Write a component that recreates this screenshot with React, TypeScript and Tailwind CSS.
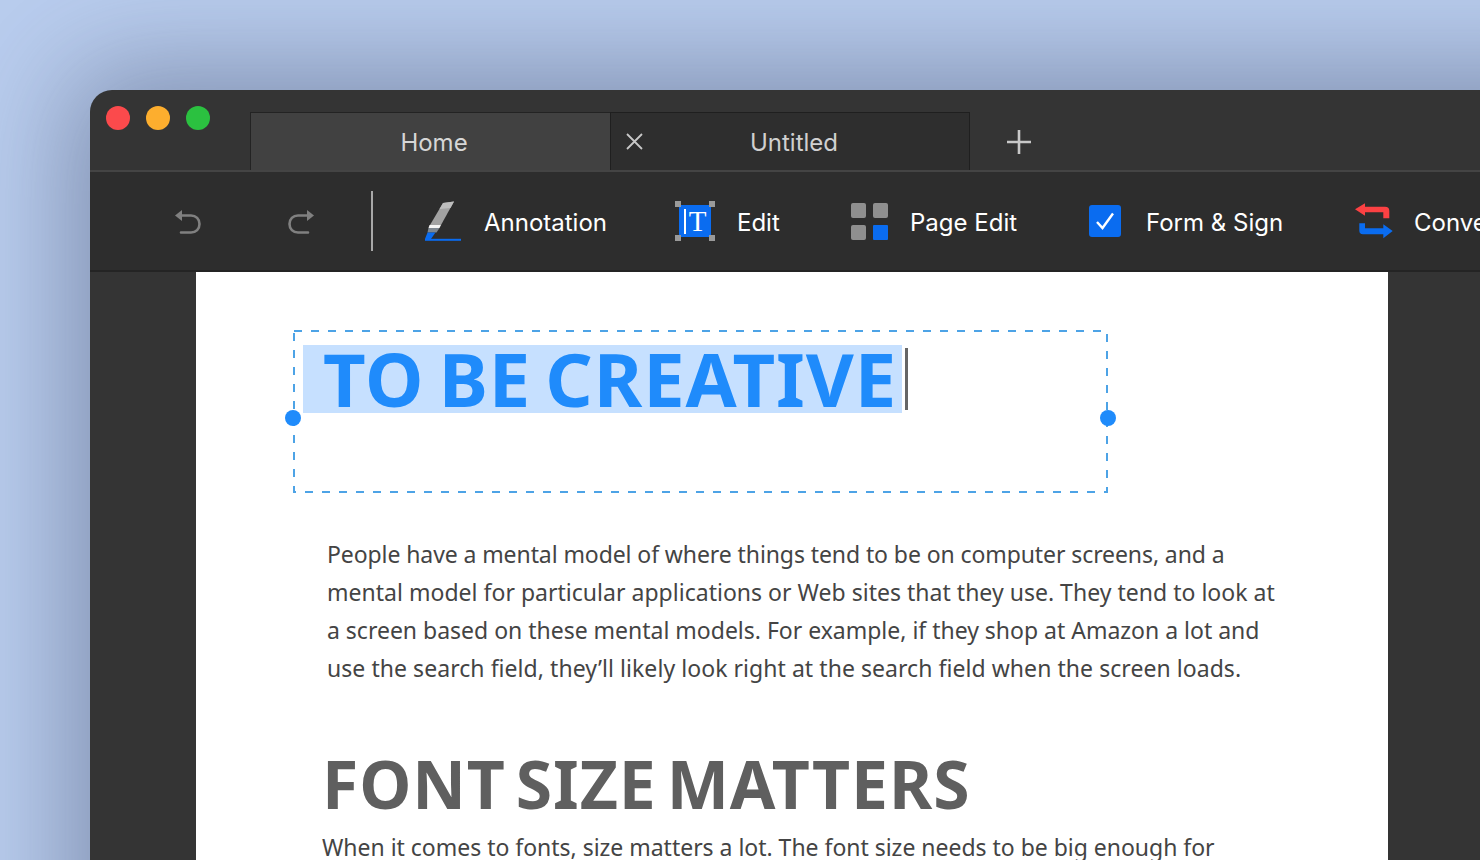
import React from "react";

function Undo({ flip = false }: { flip?: boolean }) {
  return (
    <svg width="26" height="27" viewBox="0 0 26 27" fill="none" className={flip ? "-scale-x-100" : ""}>
      <path d="M0 7.500 L7 2 V13 Z" fill="#808080" />
      <path d="M6 7.500 H16 C21 7.500 24.500 11 24.500 16 C24.500 21 21 24.500 16 24.500 H6" stroke="#808080" strokeWidth="2.600" strokeLinecap="round" />
    </svg>
  );
}

function Pen() {
  return (
    <svg width="40" height="42" viewBox="0 0 40 42" fill="none" className="mt-[1px]">
      <path d="M20 2 L31 0.500 L18 24 H7 Z" fill="#a2a2a2" />
      <path d="M20 2 L31 0.500 L27.500 7 L16.500 8 Z" fill="#bdbdbd" />
      <path d="M6.500 24 H18 L16.500 27 H5.500 Z" fill="#f4f4f4" />
      <path d="M5.500 27 H16.500 L13.500 31.500 H4.500 Z" fill="#7e8790" />
      <path d="M4.500 31.500 H12.500 L8 38 H2 Z" fill="#0a6cf0" />
      <rect x="2" y="37.800" width="36" height="2" fill="#0a6cf0" />
    </svg>
  );
}

function EditIcon() {
  return (
    <div className="relative h-[40px] w-[40px]">
      <div className="absolute left-[4px] top-[4px] flex h-[32px] w-[32px] items-center justify-center gap-[3px] bg-[#0a6cf0] text-[29px] leading-none text-white [font-family:'Liberation_Serif',serif]">
        <span className="h-[25px] w-[2px] bg-white" />
        <span>T</span>
      </div>
      <span className="absolute left-0 top-0 h-[6px] w-[6px] bg-[#9a9a9a]" />
      <span className="absolute right-0 top-0 h-[6px] w-[6px] bg-[#9a9a9a]" />
      <span className="absolute bottom-0 left-0 h-[6px] w-[6px] bg-[#9a9a9a]" />
      <span className="absolute bottom-0 right-0 h-[6px] w-[6px] bg-[#9a9a9a]" />
    </div>
  );
}

function PageIcon() {
  return (
    <div className="grid h-[37px] w-[37px] grid-cols-2 gap-[7px]">
      <span className="rounded-[2px] bg-[#8f8f8f]" />
      <span className="rounded-[2px] bg-[#8f8f8f]" />
      <span className="rounded-[2px] bg-[#8f8f8f]" />
      <span className="rounded-[1px] bg-[#0a6cf0]" />
    </div>
  );
}

function FormIcon() {
  return (
    <div className="flex h-[32px] w-[32px] items-center justify-center rounded-[3px] bg-[#0a6cf0]">
      <svg width="22" height="20" viewBox="0 0 22 20" fill="none">
        <path d="M3 11 L8.500 17 L19 2.500" stroke="#fff" strokeWidth="2.400" />
      </svg>
    </div>
  );
}

function ConvertIcon() {
  return (
    <svg width="38" height="36" viewBox="0 0 38 36" fill="none">
      <path d="M0 6.300 L10 0.300 V3.700 H30 C33 3.700 34.300 5 34.300 8 V15.300 H28.300 V9.300 H10 V12.700 Z" fill="#fb4143" />
      <path d="M37.700 28 L28.300 35.300 V31.300 H8 C5.500 31.300 4.300 30 4.300 27.500 V20.300 H10 V25.300 H28.300 V21.300 Z" fill="#0a6cf0" />
    </svg>
  );
}

function Tool({ icon, label, gap, width }: { icon: React.ReactNode; label: string; gap: string; width: string }) {
  return (
    <div className={`flex shrink-0 items-center ${gap} ${width}`}>
      <div className="shrink-0">{icon}</div>
      <span className="whitespace-nowrap pt-[3px] text-[24px] leading-none text-white">{label}</span>
    </div>
  );
}

export default function App() {
  return (
    <div className="h-[860px] w-[1480px] overflow-hidden bg-[#b9cdee] pl-[90px] pt-[90px] [font-family:Inter,'Liberation_Sans',sans-serif]">
      <div className="flex h-[900px] w-[1500px] flex-col rounded-tl-[22px] bg-[#343434] shadow-[0_0_110px_20px_rgba(50,60,90,0.42)]">
        {/* Title bar */}
        <div className="flex h-[82px] shrink-0 items-start border-b-2 border-[#444444]">
          <div className="flex w-[160px] shrink-0 gap-[16px] pl-[16px] pt-[16px]">
            <span className="h-[24px] w-[24px] rounded-full bg-[#fb4a4c]" />
            <span className="h-[24px] w-[24px] rounded-full bg-[#fdae2e]" />
            <span className="h-[24px] w-[24px] rounded-full bg-[#2bc140]" />
          </div>
          <div className="mt-[22px] flex h-[58px] w-[360px] shrink-0 items-center justify-center border-l border-t border-[#232323] bg-[#414141] pl-[7px] pt-[2px] text-[24px] text-[#d6d6d6]">
            Home
          </div>
          <div className="relative mt-[22px] flex h-[58px] w-[360px] shrink-0 items-center justify-center border-x border-t border-[#1f1f1f] bg-[#2e2e2e] pl-[8px] pt-[2px] text-[24px] text-[#d0d0d0]">
            <svg className="absolute left-[15px] top-[20px]" width="17" height="17" viewBox="0 0 17 17" fill="none">
              <path d="M1 1 L16 16 M16 1 L1 16" stroke="#c8c8c8" strokeWidth="1.800" />
            </svg>
            Untitled
          </div>
          <svg className="ml-[36px] mt-[39px] shrink-0" width="26" height="26" viewBox="0 0 26 26" fill="none">
            <path d="M13 1 V25 M1 13 H25" stroke="#c8c8c8" strokeWidth="2.600" />
          </svg>
        </div>

        {/* Toolbar */}
        <div className="flex h-[100px] shrink-0 items-center border-b-2 border-[#242424] bg-[#2d2d2d] pl-[85px]">
          <Undo />
          <div className="ml-[87px]"><Undo flip /></div>
          <span className="ml-[57px] mr-[50px] h-[60px] w-[2px] shrink-0 bg-[#a8a8a8]" />
          <Tool icon={<Pen />} label="Annotation" gap="gap-[21px]" width="w-[252px]" />
          <Tool icon={<EditIcon />} label="Edit" gap="gap-[22px]" width="w-[176px]" />
          <Tool icon={<PageIcon />} label="Page Edit" gap="gap-[22px]" width="w-[238px]" />
          <Tool icon={<FormIcon />} label="Form &amp; Sign" gap="gap-[25px]" width="w-[266px]" />
          <Tool icon={<ConvertIcon />} label="Convert" gap="gap-[21px]" width="w-[140px]" />
        </div>

        {/* Canvas */}
        <div className="flex-1 overflow-hidden pl-[106px]">
          <div className="h-[700px] w-[1192px] bg-white pl-[97px] pt-[58px] [font-family:'Noto_Sans','Open_Sans',sans-serif]">
            <div className="relative h-[163px] w-[815px] pl-[10px] pt-[15px]">
              <svg className="absolute left-0 top-0" width="815" height="163" viewBox="0 0 815 163" fill="none">
                <rect x="1" y="1" width="813" height="161" stroke="#4da3e6" strokeWidth="2" strokeDasharray="8 9" />
              </svg>
              <span className="absolute -left-[8px] top-[80px] h-[16px] w-[16px] rounded-full bg-[#1f8bfb]" />
              <span className="absolute -right-[8px] top-[80px] h-[16px] w-[16px] rounded-full bg-[#1f8bfb]" />
              <div className="flex h-[68px] items-center">
                <div className="flex h-[68px] items-center whitespace-nowrap bg-[#c6e0ff] pl-[20px] pr-[5px] text-[74px] font-bold leading-none tracking-[0.9px] [word-spacing:-6px] text-[#1f8bfb]">
                  TO BE CREATIVE
                </div>
                <span className="ml-[3px] h-[62px] w-[3px] bg-[#666666]" />
              </div>
            </div>
            <div className="mt-[42px] w-[1000px] pl-[34px] text-[23px] leading-[38px] text-[#444444]">
              <p className="whitespace-nowrap tracking-[-0.09px]">People have a mental model of where things tend to be on computer screens, and a</p>
              <p className="whitespace-nowrap tracking-[0.02px]">mental model for particular applications or Web sites that they use. They tend to look at</p>
              <p className="whitespace-nowrap tracking-[-0.01px]">a screen based on these mental models. For example, if they shop at Amazon a lot and</p>
              <p className="whitespace-nowrap tracking-[0.055px]">use the search field, they’ll likely look right at the search field when the screen loads.</p>
            </div>
            <h2 className="mt-[56px] whitespace-nowrap pl-[29px] text-[66px] font-bold leading-[80px] tracking-[0.9px] [word-spacing:-8px] text-[#5f5f5f]">FONT SIZE MATTERS</h2>
            <p className="mt-[5px] whitespace-nowrap pl-[29px] text-[23px] leading-[38px] tracking-[-0.02px] text-[#444444]">
              When it comes to fonts, size matters a lot. The font size needs to be big enough for
            </p>
          </div>
        </div>
      </div>
    </div>
  );
}
